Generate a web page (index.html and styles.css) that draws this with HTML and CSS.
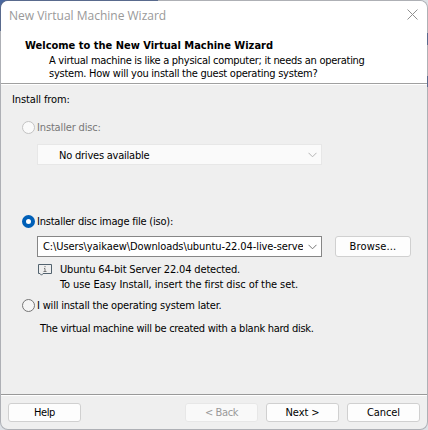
FILE: index.html
```
<!DOCTYPE html>
<html lang="en">
<head>
<meta charset="utf-8">
<title>New Virtual Machine Wizard</title>
<link rel="stylesheet" href="styles.css">
</head>
<body>
<div class="desktop">
<main class="window">
  <header class="header">
    <div class="titlebar">
      <span class="title">New Virtual Machine Wizard</span>
      <svg class="close" width="11" height="11" viewBox="0 0 11 11"><path d="M.5.5l10 10M10.5.5l-10 10"/></svg>
    </div>
    <h1><span>Welcome to the New Virtual Machine Wizard</span></h1>
    <p class="intro"><span class="intro-a">A virtual machine is like a physical computer; it needs an operating</span><br><span class="intro-b">system. How will you install the guest operating system?</span></p>
  </header>
  <section class="content">
    <div class="from"><span>Install from:</span></div>
    <div class="option muted"><i class="radio"></i><span class="disc">Installer disc:</span></div>
    <div class="combo disabled"><span class="drives">No drives available</span><svg class="chevron" width="9" height="6" viewBox="0 0 9 6"><path d="M.5.8l4 4 4-4"/></svg></div>
    <div class="option image"><i class="radio checked"></i><span class="iso">Installer disc image file (iso):</span></div>
    <div class="file">
      <div class="combo"><span class="path">C:\Users\yaikaew\Downloads\ubuntu-22.04-live-serve</span><svg class="chevron" width="9" height="6" viewBox="0 0 9 6"><path d="M.5.8l4 4 4-4"/></svg></div>
      <button class="browse"><span>Browse...</span></button>
    </div>
    <div class="note">
      <svg width="14" height="12" viewBox="0 0 14 12"><path class="bubble" d="M.5.5h13v9h-8.500l-1.500 1.700-1.500-1.700H.5z"/><path class="info" d="M7 2v1.200M6 4.500h1v3.200M5.500 7.500h3"/></svg>
      <div><span class="detected">Ubuntu 64-bit Server 22.04 detected.</span><br><span class="easy">To use Easy Install, insert the first disc of the set.</span></div>
    </div>
    <div class="option later-row"><i class="radio"></i><span class="later">I will install the operating system later.</span></div>
    <div class="blank"><span>The virtual machine will be created with a blank hard disk.</span></div>
  </section>
  <footer class="footer">
    <button class="help"><span>Help</span></button>
    <button disabled><span>&lt; Back</span></button>
    <button><span>Next &gt;</span></button>
    <button><span>Cancel</span></button>
  </footer>
</main>
</div>
</body>
</html>
```
FILE: styles.css
```
* { box-sizing: border-box; }
body { margin: 0; font: 11px/15px "DejaVu Sans Condensed", "DejaVu Sans", sans-serif; color: #000; }
.desktop {
  width: 428px; height: 430px; overflow: hidden;
  background:
    linear-gradient(#4a68a0, #4a68a0) 0 0 / 158px 31px no-repeat,
    linear-gradient(#4a68a0, #4a68a0) 427px 33px / 1px 12px no-repeat,
    linear-gradient(#4a68a0, #4a68a0) 427px 76px / 1px 11px no-repeat,
    #dde1e6;
}
.window { width: 428px; height: 430px; border: 1px solid rgba(110, 110, 115, .42); border-radius: 8px; background: #efefef; background-clip: padding-box; overflow: hidden; display: flex; flex-direction: column; }
span { white-space: nowrap; }
.header { height: 84px; flex: none; background: #fff; border-bottom: 1px solid #fff; box-shadow: inset 0 -1px #a0a0a0; }
.titlebar { height: 35px; padding: 5px 9px 0 8px; display: flex; justify-content: space-between; }
.title { font: 12px/19px "Open Sans", sans-serif; color: #999; }
.close { margin-top: 3px; fill: none; stroke: #909090; stroke-width: 1; }
h1 { margin: 0 0 0 24px; font-size: 11px; line-height: 19px; height: 18px; }
.intro { margin: 0 0 0 48px; line-height: 13px; }
.intro-a { letter-spacing: -.28px; }
.intro-b { letter-spacing: -.25px; }
.content { height: 309px; flex: none; padding: 6px 16px 0 11px; }
.from { height: 28px; line-height: 17px; letter-spacing: -.12px; }
.option { height: 16px; line-height: 16px; margin-left: 10px; display: flex; align-items: center; gap: 2px; }
.option span { padding-top: 2px; }
.radio { width: 13px; height: 13px; flex: none; border: 1px solid #767676; border-radius: 50%; background: #f5f5f5; }
.muted { color: #777; letter-spacing: -.15px; }
.muted .radio { border-color: #c3c3c3; background: #fafafa; }
.radio.checked { border: 4px solid #005fb7; background: #fff; }
.combo { width: 285px; height: 21px; margin-left: 25px; padding: 0 4px 0 5px; display: flex; align-items: center; justify-content: space-between; background: #fff; border: 1px solid #868686; }
.combo.disabled { margin-top: 9px; background: #fafafa; border-color: #e7e7e7; padding-left: 21px; }
.chevron { flex: none; fill: none; stroke: #777; }
.disabled .chevron { stroke: #b4b4b4; }
.drives { letter-spacing: -.22px; padding-top: 2px; }
.path { letter-spacing: -.09px; width: 260px; overflow: hidden; }
.iso { letter-spacing: -.22px; }
.image { margin-top: 48px; }
.file { display: flex; gap: 13px; margin-top: 7px; }
button { height: 19px; width: 73px; padding: 1px 0 0; border: 1px solid #d0d0d0; border-radius: 3px; background: #fdfdfd; color: #000; font: inherit; line-height: 16px; letter-spacing: -.1px; }
button:disabled { color: #999; background: #f9f9f9; border-color: #e7e7e7; letter-spacing: -.4px; }
.browse { width: 76px; height: 21px; letter-spacing: .15px; }
.note { height: 32px; margin: 5px 0 0 26px; display: flex; gap: 8px; }
.note svg { margin-top: 2px; fill: none; stroke: #53636f; }
.note .info { stroke: #777; }
.detected { letter-spacing: -.16px; }
.easy { letter-spacing: -.09px; }
.later-row { margin-top: 3px; letter-spacing: -.19px; }
.blank { margin: 8px 0 0 28px; letter-spacing: -.28px; }
.footer { height: 35px; flex: none; border-top: 1px solid #999; box-shadow: inset 0 1px #fff; padding: 8px 7px 0; display: flex; gap: 8px; }
.help { margin-right: auto; letter-spacing: -.4px; }
```
